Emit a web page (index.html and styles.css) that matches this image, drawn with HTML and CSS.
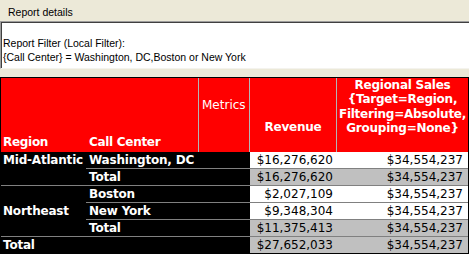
FILE: index.html
```html
<!DOCTYPE html>
<html>
<head>
<meta charset="utf-8">
<link rel="stylesheet" href="styles.css">
</head>
<body>
<div class="page">
  <div class="titlebar">Report details</div>
  <div class="filter">
    <div class="filter-line">Report Filter (Local Filter):</div>
    <div class="filter-line">{Call Center} = Washington, DC,Boston or New York</div>
  </div>
  <div class="gap"></div>
  <div class="grid">
    <div class="head">
      <div class="h-rows"><span>Region</span><span>Call Center</span></div>
      <div class="h-metrics">Metrics</div>
      <div class="h-metric h-rev">Revenue</div>
      <div class="h-metric h-rs">Regional Sales<br>{Target=Region,<br>Filtering=Absolute,<br>Grouping=None}</div>
    </div>
    <div class="body">
      <div class="rh region r-ma">Mid-Atlantic</div>
      <div class="rh cc line r1">Washington, DC</div>
      <div class="val rev line r1">$16,276,620</div>
      <div class="val rs line r1">$34,554,237</div>

      <div class="rh cc line r2">Total</div>
      <div class="val rev line tot r2">$16,276,620</div>
      <div class="val rs line tot r2">$34,554,237</div>

      <div class="rh region r-ne">Northeast</div>
      <div class="rh cc line r3">Boston</div>
      <div class="val rev line r3">$2,027,109</div>
      <div class="val rs line r3">$34,554,237</div>

      <div class="rh cc line r4">New York</div>
      <div class="val rev line r4">$9,348,304</div>
      <div class="val rs line r4">$34,554,237</div>

      <div class="rh cc line r5">Total</div>
      <div class="val rev line tot r5">$11,375,413</div>
      <div class="val rs line tot r5">$34,554,237</div>

      <div class="rh grand r6">Total</div>
      <div class="val rev tot r6">$27,652,033</div>
      <div class="val rs tot r6">$34,554,237</div>
    </div>
  </div>
</div>
</body>
</html>
```

FILE: styles.css
```css
html, body {
  margin: 0;
  padding: 0;
  background: #ffffff;
}

.page {
  width: 469px;
  height: 256px;
  overflow: hidden;
  background: #ffffff;
}

.titlebar {
  box-sizing: border-box;
  height: 21px;
  padding: 3px 0 0 8px;
  line-height: 18px;
  background: #ECE9D8;
  font-family: "Liberation Sans", Arial, sans-serif;
  font-size: 10.5px;
  color: #000;
}

.filter {
  box-sizing: border-box;
  height: 48px;
  border-top: 1px solid #9D9D9D;
  border-left: 1px solid #9D9D9D;
  border-bottom: 1px solid #F4F3EE;
  box-shadow: inset 1px 1px 0 #404040;
  background: #ffffff;
  padding: 14px 0 0 2px;
  font-family: "Liberation Sans", Arial, sans-serif;
  font-size: 10.5px;
  line-height: 14px;
  color: #000;
}

.gap {
  height: 8px;
  background: #ECE9D8;
}

.grid {
  border: 1px solid #000;
  font-family: "DejaVu Sans", Verdana, sans-serif;
  font-size: 12px;
}

.head {
  display: grid;
  grid-template-columns: 198px 51px 87px 131px;
  height: 74px;
  background: #FF0000;
  color: #ffffff;
}

.head > div {
  box-sizing: border-box;
}

.h-rows {
  display: grid;
  grid-template-columns: 86px 1fr;
  padding: 56px 0 0 2px;
  line-height: 16px;
  font-weight: bold;
  letter-spacing: -0.3px;
  border-right: 1px solid #B4B4B4;
}

.h-metrics {
  padding: 20px 0 0 3px;
  line-height: 14px;
  border-right: 1px solid #B4B4B4;
}

.h-metric {
  text-align: center;
  font-weight: bold;
  line-height: 14.3px;
  letter-spacing: -0.25px;
}

.h-rev {
  padding-top: 42px;
  border-right: 1px solid #B4B4B4;
}

.h-rs {
  padding-top: 0;
}

.body {
  display: grid;
  grid-template-columns: 85px 164px 87px 131px;
  grid-template-rows: repeat(5, 17px) 16px;
  background: #000;
}

.body > div {
  box-sizing: border-box;
  line-height: 16px;
  white-space: nowrap;
}

.rh {
  color: #ffffff;
  font-weight: bold;
  background: #000;
  letter-spacing: -0.2px;
}

.line {
  border-bottom: 1px solid #808080;
}

.region {
  grid-column: 1;
  padding-left: 2px;
  border-bottom: 1px solid #808080;
}

.r-ma {
  grid-row: 1 / 3;
}

.r-ne {
  grid-row: 3 / 6;
  display: flex;
  align-items: center;
  padding-bottom: 1px;
}

.cc {
  grid-column: 2;
  padding-left: 3px;
}

.grand {
  grid-column: 1 / 3;
  padding-left: 2px;
}

.val {
  background: #ffffff;
  color: #000;
  text-align: right;
}

.val.tot {
  background: #C0C0C0;
}

.rev {
  grid-column: 3;
  padding-right: 4px;
}

.rs {
  grid-column: 4;
  padding-right: 5px;
}

.r1 { grid-row: 1; }
.r2 { grid-row: 2; }
.r3 { grid-row: 3; }
.r4 { grid-row: 4; }
.r5 { grid-row: 5; }
.r6 { grid-row: 6; }
```
